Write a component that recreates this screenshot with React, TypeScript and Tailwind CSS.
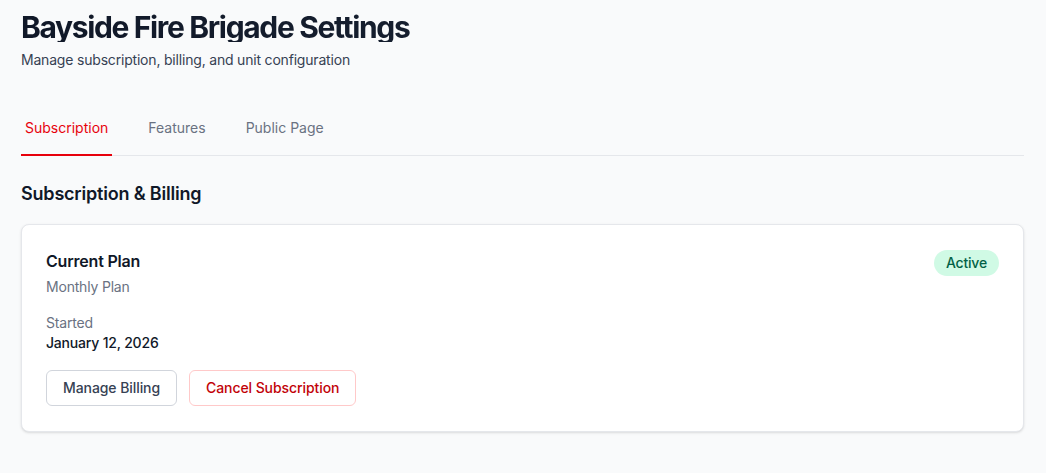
import { useState } from "react";

const tabs = ["Subscription", "Features", "Public Page"];

export default function App() {
  const [activeTab, setActiveTab] = useState("Subscription");

  return (
    <div
      className="min-h-screen bg-gray-50 text-gray-900 tracking-[-0.012em]"
      style={{ fontFamily: "Inter, 'Noto Sans', sans-serif" }}
    >
      <div className="pl-[21px] pr-[22px] pt-3">
        {/* Header */}
        <h1 className="bg-gradient-to-r from-gray-900 to-gray-800 bg-clip-text text-[30px] font-bold leading-none tracking-[-0.045em] text-transparent">
          Bayside Fire Brigade Settings
        </h1>
        <p className="mt-2 text-sm leading-5 text-gray-700">
          Manage subscription, billing, and unit configuration
        </p>

        {/* Tabs */}
        <nav className="mt-8 flex gap-8 border-b border-gray-200 tracking-normal">
          {tabs.map((tab) => (
            <button
              key={tab}
              onClick={() => setActiveTab(tab)}
              className={
                activeTab === tab
                  ? "-mb-px border-b-2 border-red-600 px-1 pt-4 pb-4 text-sm leading-5 text-red-600"
                  : "-mb-px border-b-2 border-transparent px-1 pt-4 pb-4 text-sm leading-5 text-gray-500"
              }
            >
              {tab}
            </button>
          ))}
        </nav>

        {/* Section */}
        <h2 className="mt-6 text-lg font-semibold leading-7 text-gray-900">
          Subscription &amp; Billing
        </h2>

        <div className="mt-4 rounded-lg border border-gray-200 bg-white px-6 pt-6 pb-[25px] shadow-sm">
          <div className="flex items-start justify-between">
            <div>
              <h3 className="text-base font-semibold leading-6 text-gray-900">
                Current Plan
              </h3>
              <p className="mt-1 text-sm leading-5 text-gray-500">Monthly Plan</p>
            </div>
            <span className="mt-px rounded-full bg-emerald-100 px-3 py-[3px] text-sm font-medium leading-5 text-emerald-800">
              Active
            </span>
          </div>

          <div className="mt-4">
            <p className="text-sm leading-5 text-gray-500">Started</p>
            <p className="text-sm font-medium leading-5 text-gray-900">
              January 12, 2026
            </p>
          </div>

          <div className="mt-[17px] flex gap-3 tracking-[-0.005em]">
            <button className="h-9 rounded-md border border-gray-300 bg-white px-4 text-sm font-medium text-gray-700">
              Manage Billing
            </button>
            <button className="h-9 rounded-md border border-red-200 bg-white px-4 text-sm font-medium text-red-700">
              Cancel Subscription
            </button>
          </div>
        </div>
      </div>
    </div>
  );
}
